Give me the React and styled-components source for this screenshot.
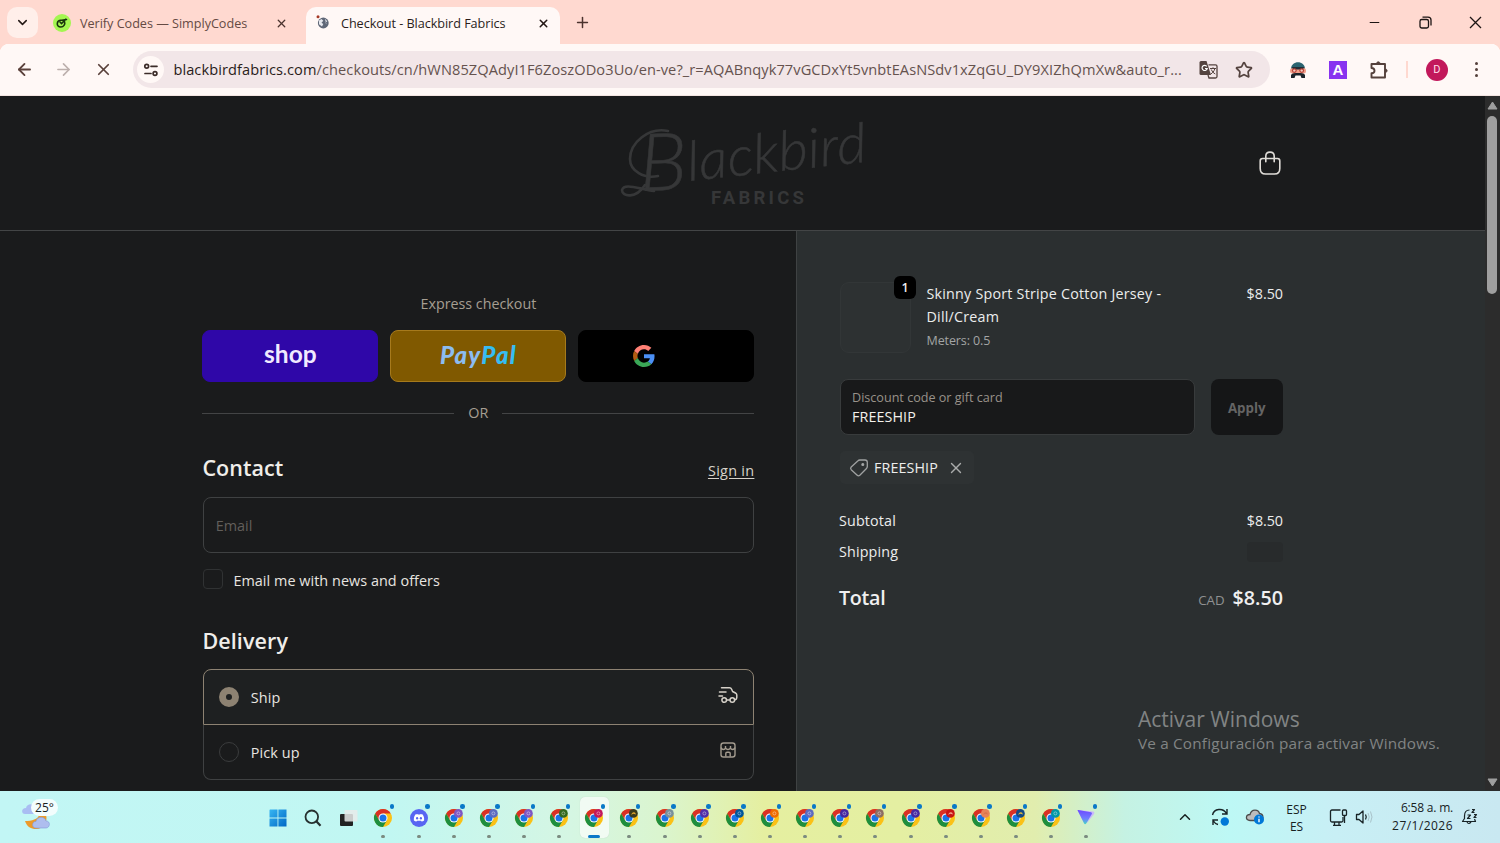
import React from 'react';
import styled, { createGlobalStyle } from 'styled-components';
import { ArrowLeft, ArrowRight, X, Plus, ChevronDown, ChevronUp, Star, Minus } from 'lucide-react';

const GlobalStyle = createGlobalStyle`
    * {
        box-sizing: border-box;
    }
    body {
        margin: 0;
        overflow: hidden;
        font-family: "Open Sans", "Noto Sans", sans-serif;
        background: #1a1b1c;
    }
    svg {
        display: block;
        flex: none;
    }
`;

const taskbarApps = [
    { kind: 'chrome' },
    { kind: 'discord' },
    { kind: 'chrome', profile: '#7e57c2' },
    { kind: 'chrome', profile: '#5c6bc0' },
    { kind: 'chrome', profile: '#7e57c2' },
    { kind: 'chrome', profile: '#33691e' },
    { kind: 'chrome', profile: '#c2185b', active: true },
    { kind: 'chrome', profile: '#3b3a1c', mark: '#e0a52c' },
    { kind: 'chrome', profile: '#78909c' },
    { kind: 'chrome', profile: '#512da8' },
    { kind: 'chrome', profile: '#01579b' },
    { kind: 'chrome', profile: '#ef6c00' },
    { kind: 'chrome', profile: '#5c6bc0' },
    { kind: 'chrome', profile: '#4527a0' },
    { kind: 'chrome', profile: '#8d6e63' },
    { kind: 'chrome', profile: '#4527a0' },
    { kind: 'chrome', profile: '#c81414', mark: '#f3a08c' },
    { kind: 'chrome', profile: '#e8835a', mark: '#d9744c' },
    { kind: 'chrome', profile: '#134a86', mark: '#e2b93c' },
    { kind: 'chrome', profile: '#0097a7' },
    { kind: 'proton' },
];

function ChromeIcon({ profile, mark }) {
    return (
        <svg width="20" height="20" viewBox="0 0 20 20">
            <circle cx="10" cy="10" r="9" fill="#fbc116" />
            <path d="M2.2 5.5A9 9 0 0 1 17.8 5.5L10 5.5L6.1 12.2Z" fill="#d93025" />
            <path d="M2.2 5.5A9 9 0 0 0 10 19L13.9 12.2L6.1 12.2Z" fill="#1e8e3e" />
            <circle cx="10" cy="10" r="4.5" fill="#fff" />
            <circle cx="10" cy="10" r="3.5" fill="#1a73e8" />
            {profile && <circle cx="14.4" cy="5.4" r="4.4" fill={profile} />}
            {profile && !mark && <circle cx="14.4" cy="5.4" r="1.5" fill="none" stroke="#fff" strokeOpacity="0.45" strokeWidth="0.9" />}
            {mark && <path d="M11.8 6.8L14 4.2L16 4.4L17 6.4L14.6 5.8Z" fill={mark} />}
        </svg>
    );
}

function DiscordIcon() {
    return (
        <svg width="20" height="20" viewBox="0 0 20 20">
            <circle cx="10" cy="10" r="9" fill="#5865f2" />
            <path d="M6.3 6.6C7.2 6.1 8 5.9 8.4 5.9L8.8 6.6H11.2L11.6 5.9C12.1 5.9 12.9 6.1 13.7 6.6C14.9 8.5 15.3 10.4 15.1 12.4C14.3 13.1 13.4 13.5 12.6 13.6L12 12.7H8L7.4 13.6C6.6 13.5 5.7 13.1 4.9 12.4C4.7 10.4 5.1 8.5 6.3 6.6Z" fill="#fff" />
            <ellipse cx="8.1" cy="10.2" rx="1.1" ry="1.3" fill="#5865f2" />
            <ellipse cx="11.9" cy="10.2" rx="1.1" ry="1.3" fill="#5865f2" />
        </svg>
    );
}

function ProtonIcon() {
    return (
        <svg width="20" height="20" viewBox="0 0 20 20">
            <defs>
                <linearGradient id="vpn" x1="0" y1="0" x2="0" y2="1">
                    <stop offset="0" stopColor="#6d4aff" />
                    <stop offset="0.6" stopColor="#6f7cff" />
                    <stop offset="1" stopColor="#45d6c8" />
                </linearGradient>
            </defs>
            <path d="M3 2.3L17 3.6Q19 4 18 6L11 15Z" fill="#c9b8fa" />
            <path d="M1.6 2.6Q1 1.8 2.4 2L15 4.2Q16.6 4.8 15.8 6L10.2 15.4Q9 17 8 15.2Z" fill="url(#vpn)" />
        </svg>
    );
}

function BlackbirdLogo() {
    return (
        <svg width="280" height="130" viewBox="-10 -19 280 130">
            <g fill="none" stroke="#363738" strokeWidth="2.6" strokeLinecap="round">
                <path d="M50 14C30 10 12 26 12 42C12 54 26 62 40 59" />
                <path d="M27 68C18 82 4 80 4 73C6 66 18 71 36 74" />
            </g>
            <g fill="#363738" stroke="#363738" strokeWidth="0.5" fontFamily="Lato, sans-serif">
                <text x="22" y="74" fontSize="80" fontStyle="italic" fontWeight="300" textLength="48" lengthAdjust="spacingAndGlyphs" transform="rotate(-2 22 74)">B</text>
                <text x="71" y="64" fontSize="55" fontStyle="italic" fontWeight="300" textLength="180" lengthAdjust="spacingAndGlyphs" transform="rotate(-6.2 71 64)">lackbird</text>
            </g>
            <text x="93" y="87" fill="#363738" fontFamily="Roboto, sans-serif" fontSize="18.5" fontWeight="700" textLength="93">FABRICS</text>
        </svg>
    );
}

function BagIcon() {
    return (
        <svg width="24" height="26" viewBox="0 0 24 26" fill="none" stroke="#e0ddd8" strokeWidth="1.6">
            <path d="M4.5 8.5H19.5Q21.8 8.5 21.8 11V18.5Q21.8 24 16.5 24H7.5Q2.2 24 2.2 18.5V11Q2.2 8.5 4.5 8.5Z" strokeLinejoin="round" />
            <path d="M7.8 11.8V6.2C7.8 0.8 16.2 0.8 16.2 6.2V11.8" strokeLinecap="round" />
        </svg>
    );
}

function GoogleG() {
    return (
        <svg width="22" height="22" viewBox="0 0 48 48">
            <path fill="#ff8075" d="M24 9.5c3.5 0 6.7 1.2 9.2 3.6l6.9-6.9C35.9 2.4 30.5 0 24 0 14.6 0 6.5 5.4 2.6 13.2l8 6.2C12.4 13.7 17.7 9.5 24 9.5z" />
            <path fill="#4b8ff5" d="M47 24.6c0-1.6-.2-3.1-.4-4.6H24v9h12.9c-.6 3-2.2 5.5-4.7 7.2l7.7 6C44.4 38 47 31.8 47 24.6z" />
            <path fill="#b35c12" d="M10.5 28.6c-.5-1.5-.8-3-.8-4.6s.3-3.1.8-4.6l-8-6.2C.9 16.5 0 20.1 0 24s.9 7.5 2.6 10.8z" />
            <path fill="#3aa757" d="M24 48c6.5 0 11.9-2.1 15.9-5.8l-7.7-6c-2.2 1.5-4.9 2.3-8.2 2.3-6.3 0-11.6-4.2-13.5-9.9l-7.9 6.2C6.5 42.6 14.6 48 24 48z" />
        </svg>
    );
}

function App() {
    return (
        <Screen>
            <GlobalStyle />
            <TabStrip>
                <TabSearch><ChevronDown size={15} strokeWidth={2.4} /></TabSearch>
                <Tab $width={268}>
                    <svg width="18" height="18" viewBox="0 0 18 18">
                        <circle cx="9" cy="9" r="9" fill="#a4f651" />
                        <path d="M12.8 5.2L8.5 9.5L7 8M11.5 7.5C12.5 10.5 10.5 13 7.8 13C5.5 13 4 11.4 4.3 9.3C4.6 7.2 6.5 6 8.8 6.3L13.5 5.5" fill="none" stroke="#18340c" strokeWidth="1.6" strokeLinecap="round" />
                    </svg>
                    <TabTitle $color="#654a43" $spacing="-0.03px">Verify Codes — SimplyCodes</TabTitle>
                    <X size={13} color="#4b332e" strokeWidth={2.4} />
                </Tab>
                <Tab $width={254} $active>
                    <svg width="18" height="18" viewBox="0 0 18 18">
                        <circle cx="9.3" cy="9" r="5.4" fill="#5f6777" />
                        <path d="M5 6.5L7.5 5L9.3 6.8L7.5 8.8L9.3 10L8 12.5L5 10.2ZM10.8 4.8L13.3 7.3L11.4 8.8L12.6 10.5" fill="#e6e8ee" />
                        <circle cx="4" cy="2.8" r="1.5" fill="#a63b28" />
                    </svg>
                    <TabTitle $color="#2a1d1a" $spacing="-0.05px">Checkout - Blackbird Fabrics</TabTitle>
                    <X size={13} color="#231815" strokeWidth={2.8} />
                </Tab>
                <NewTab><Plus size={17} strokeWidth={2.1} /></NewTab>
                <WindowControls>
                    <Minus size={15} strokeWidth={1.6} />
                    <svg width="13" height="13" viewBox="0 0 13 13" fill="none" stroke="#1c1413" strokeWidth="1.3">
                        <rect x="1" y="3.5" width="8.5" height="8.5" rx="1.8" />
                        <path d="M3.5 1.1H9Q12 1.1 12 4V9.5" />
                    </svg>
                    <svg width="13" height="13" viewBox="0 0 13 13" stroke="#1c1413" strokeWidth="1.3"><path d="M1 1L12 12M12 1L1 12" /></svg>
                </WindowControls>
            </TabStrip>

            <Toolbar>
                <NavIcon $color="#5a413b"><ArrowLeft size={19} strokeWidth={2.3} /></NavIcon>
                <NavIcon $color="#bdb0ad"><ArrowRight size={19} strokeWidth={2.1} /></NavIcon>
                <NavIcon $color="#5a413b"><X size={19} strokeWidth={2.2} /></NavIcon>
                <AddressBar>
                    <SiteInfo>
                        <svg width="16" height="16" viewBox="0 0 16 16" fill="none" stroke="#3c2c29" strokeWidth="1.7">
                            <circle cx="3.7" cy="4.3" r="1.9" />
                            <path d="M8 4.3H14M2 11.5H8" strokeLinecap="round" />
                            <circle cx="12" cy="11.5" r="1.9" />
                        </svg>
                    </SiteInfo>
                    <Url><b>blackbirdfabrics.com</b>/checkouts/cn/hWN85ZQAdyI1F6ZoszODo3Uo/en-ve?_r=AQABnqyk77vGCDxYt5vnbtEAsNSdv1xZqGU_DY9XIZhQmXw&amp;auto_r...</Url>
                    <svg width="19" height="18" viewBox="0 0 19 18">
                        <path d="M9.5 3.8H16.5Q18 3.8 18 5.3V15.5Q18 17 16.5 17H10L9 14" fill="none" stroke="#54433f" strokeWidth="1.3" />
                        <path d="M2 0H7.5L12 14H2Q0.5 14 0.5 12.5V1.5Q0.5 0 2 0Z" fill="#54433f" />
                        <path d="M7.8 5.4A2.6 2.6 0 1 0 8.2 7.5H6" stroke="#fff" strokeWidth="1.2" fill="none" />
                        <path d="M11 7.5H17M14 6.3V7.5M15.8 7.8C15 10.5 13.5 12 11.8 13M12.3 8.5C13.3 10.8 14.5 12 16.3 13" fill="none" stroke="#54433f" strokeWidth="1" />
                    </svg>
                    <Star size={18} color="#54433f" strokeWidth={2.3} />
                </AddressBar>
                <Extensions>
                    <svg width="18" height="18" viewBox="0 0 18 18">
                        <path d="M2 8C2 -1 16 -1 16 8Z" fill="#2b6470" />
                        <rect x="1" y="7" width="16" height="5.5" rx="2.5" fill="#f2a08b" />
                        <path d="M3 6H15L14 8.5H4Z" fill="#232d35" />
                        <circle cx="5.3" cy="9.6" r="2.4" fill="#b84238" />
                        <circle cx="12.7" cy="9.6" r="2.4" fill="#b84238" />
                        <circle cx="5.3" cy="9.6" r="1.2" fill="#f6c9bd" />
                        <circle cx="12.7" cy="9.6" r="1.2" fill="#f6c9bd" />
                        <path d="M2 17V14C3 12 6 12 9 12C12 12 15 12 16 14V17H12.5L11.5 14.5H6.5L5.5 17Z" fill="#1c242b" />
                    </svg>
                    <ExtensionA>A</ExtensionA>
                    <svg width="20" height="20" viewBox="0 0 20 20" fill="none" stroke="#54403b" strokeWidth="1.9" strokeLinejoin="round">
                        <path d="M2.5 4H16V17.5H2.5V13.3C6.5 13 6.5 8.3 2.5 8Z" />
                        <path d="M7.5 3.5C7.7 1.3 10.9 1.3 11.1 3.5ZM16.5 9C18.7 9.2 18.7 12.2 16.5 12.4Z" fill="#54403b" strokeWidth="0.8" />
                    </svg>
                </Extensions>
                <ToolbarDivider />
                <Avatar>D</Avatar>
                <MenuDots><i /><i /><i /></MenuDots>
            </Toolbar>

            <Viewport>
                <Page>
                    <Header>
                        <BlackbirdLogo />
                        <BagIcon />
                    </Header>
                    <Columns>
                        <Main>
                            <ExpressTitle>Express checkout</ExpressTitle>
                            <ExpressRow>
                                <ExpressButton $bg="#2f07a8"><ShopWord>shop</ShopWord></ExpressButton>
                                <ExpressButton $bg="#805900" $border="#a67a1c"><PayPalWord>Pay<span>Pal</span></PayPalWord></ExpressButton>
                                <ExpressButton $bg="#000" $google><GoogleG /></ExpressButton>
                            </ExpressRow>
                            <OrRow>OR</OrRow>
                            <SectionHead>
                                <SectionTitle $spacing="0.05px">Contact</SectionTitle>
                                <SignIn>Sign in</SignIn>
                            </SectionHead>
                            <EmailField>Email</EmailField>
                            <CheckRow><Checkbox />Email me with news and offers</CheckRow>
                            <SectionTitle $spacing="0.1px">Delivery</SectionTitle>
                            <OptionList>
                                <Option $selected>
                                    <Radio $selected />
                                    <OptionLabel>Ship</OptionLabel>
                                    <svg width="20" height="18" viewBox="0 0 20 18" fill="none" stroke="#d6d1c9" strokeWidth="1.5" strokeLinecap="round" strokeLinejoin="round">
                                        <path d="M3.5 1.8H11.5Q13 1.8 13.6 3.2L14.6 5.5L17.5 7Q18.8 7.7 18.8 9V11.5Q18.8 13.3 17.2 13.8M1.5 6H8M1 10H4.5M8.8 14H11.5" />
                                        <circle cx="6.2" cy="14" r="2.3" />
                                        <circle cx="14.3" cy="14" r="2.3" />
                                    </svg>
                                </Option>
                                <Option>
                                    <Radio />
                                    <OptionLabel>Pick up</OptionLabel>
                                    <svg width="20" height="18" viewBox="0 0 20 18" fill="none" stroke="#a39b8e" strokeWidth="1.4" strokeLinejoin="round">
                                        <rect x="3" y="2" width="14" height="14" rx="2.5" />
                                        <path d="M3 6.5Q3.5 8.5 5.3 8.5Q7 8.5 7.5 7Q8.5 8.5 10 8.5Q11.5 8.5 12.5 7Q13 8.5 14.7 8.5Q16.5 8.5 17 6.5M7.5 5V7M12.5 5V7M7.8 15.5V12.5Q7.8 11.3 9 11.3H11Q12.2 11.3 12.2 12.5V15.5" />
                                    </svg>
                                </Option>
                            </OptionList>
                        </Main>

                        <Summary>
                            <ProductRow>
                                <Thumb><Quantity>1</Quantity></Thumb>
                                <ProductInfo>
                                    <ProductName>Skinny Sport Stripe Cotton Jersey - Dill/Cream</ProductName>
                                    <ProductMeta>Meters: 0.5</ProductMeta>
                                </ProductInfo>
                                <Price>$8.50</Price>
                            </ProductRow>
                            <DiscountRow>
                                <DiscountField>
                                    <small>Discount code or gift card</small>
                                    <span>FREESHIP</span>
                                </DiscountField>
                                <ApplyButton>Apply</ApplyButton>
                            </DiscountRow>
                            <CodeTag>
                                <svg width="20" height="20" viewBox="0 0 20 20" fill="none" stroke="#a0a2a2" strokeWidth="1.3" strokeLinejoin="round">
                                    <path d="M10.8 2H16Q18.3 2 18.3 4.3V8.5Q18.3 9.7 17.5 10.5L10.8 17.3Q9.5 18.5 8.2 17.3L2.2 11.7Q1 10.3 2.2 9L9 2.7Q9.7 2 10.8 2Z" />
                                    <circle cx="13.8" cy="6.5" r="0.9" fill="#d0d0d0" />
                                </svg>
                                <span>FREESHIP</span>
                                <X size={18} color="#a9abab" strokeWidth={1.8} />
                            </CodeTag>
                            <SumRow><span>Subtotal</span><Price>$8.50</Price></SumRow>
                            <SumRow><span>Shipping</span><Skeleton /></SumRow>
                            <TotalRow>
                                <TotalLabel>Total</TotalLabel>
                                <TotalValue><small>CAD</small>$8.50</TotalValue>
                            </TotalRow>
                        </Summary>
                    </Columns>
                </Page>
                <Scrollbar>
                    <svg width="11" height="9" viewBox="0 0 11 9"><path d="M5.5 1L10 8H1Z" fill="#9f9f9f" stroke="#9f9f9f" strokeLinejoin="round" /></svg>
                    <ScrollThumb />
                    <svg width="11" height="9" viewBox="0 0 11 9"><path d="M5.5 8L10 1H1Z" fill="#9f9f9f" stroke="#9f9f9f" strokeLinejoin="round" /></svg>
                </Scrollbar>
                <ActivationNotice>
                    <h4>Activar Windows</h4>
                    <p>Ve a Configuración para activar Windows.</p>
                </ActivationNotice>
            </Viewport>

            <Taskbar>
                <Weather>
                    <svg width="32" height="30" viewBox="0 0 32 30">
                        <path d="M3 20C10 20 16 18 17 14H24C26 20 22 28 14 28C9 28 5 26 3 20Z" fill="#ec9a2b" />
                        <path d="M3 13C-1 13 -1 7 4 7C5 2 12 2 13 7V13Z" fill="#a9bdf2" />
                        <path d="M14 27C9 27 10 20 14 20.5C15 15 23 15 24 20C29 20 28 27 24 27Z" fill="#aebdee" stroke="#8098d8" strokeWidth="0.6" />
                    </svg>
                    <Temperature>25°</Temperature>
                </Weather>
                <Apps>
                    <AppCell>
                        <svg width="18" height="18" viewBox="0 0 18 18">
                            <defs>
                                <linearGradient id="win" x1="0" y1="0" x2="1" y2="1">
                                    <stop offset="0" stopColor="#38b6f2" />
                                    <stop offset="1" stopColor="#0067c5" />
                                </linearGradient>
                            </defs>
                            <path d="M1 .5H8.5V8.5H.5V1ZM9.4 .5H17.5V8.5H9.4ZM.5 9.4H8.5V17.5H.5ZM9.4 9.4H17.5V17.5H9.4Z" fill="url(#win)" />
                        </svg>
                    </AppCell>
                    <AppCell>
                        <svg width="18" height="18" viewBox="0 0 18 18" fill="none" stroke="#26302f" strokeWidth="1.8">
                            <circle cx="7.8" cy="7.8" r="6.3" />
                            <path d="M12.3 12.3L16.5 16.8" strokeWidth="2.2" />
                        </svg>
                    </AppCell>
                    <AppCell>
                        <svg width="20" height="18" viewBox="0 0 20 18">
                            <rect x="2" y="5" width="13" height="12" rx="1" fill="#222" />
                            <rect x="6.5" y="1" width="13" height="11.5" rx="1" fill="#e7ebea" fillOpacity="0.85" />
                        </svg>
                    </AppCell>
                    {taskbarApps.map((app, index) => (
                        <AppCell key={index} $active={app.active}>
                            {app.kind === 'chrome' && <ChromeIcon profile={app.profile} mark={app.mark} />}
                            {app.kind === 'discord' && <DiscordIcon />}
                            {app.kind === 'proton' && <ProtonIcon />}
                            <Notification />
                            <Running $active={app.active} />
                        </AppCell>
                    ))}
                </Apps>
                <Tray>
                    <TraySlot $width={35}><ChevronUp size={18} strokeWidth={2} /></TraySlot>
                    <TraySlot $width={35}>
                        <svg width="20" height="20" viewBox="0 0 20 20" fill="none" stroke="#182326" strokeWidth="1.4">
                            <path d="M2.5 8C4 1.5 13 .5 16.5 6.5M17 2V7H12M3 18V13H8M3 13.5C4.5 16 6 17 8 17.5" />
                            <circle cx="14.8" cy="14.5" r="4.2" fill="#0078d7" stroke="none" />
                        </svg>
                    </TraySlot>
                    <TraySlot $width={35}>
                        <svg width="20" height="18" viewBox="0 0 20 18">
                            <path d="M5 12.5C0 12.5 .5 6.5 5 6.5C6.5 .5 13.5 1 14.5 5.5C19 6 19 12.5 15 12.5Z" fill="#bdbdbd" stroke="#4c4c4c" strokeWidth="1.3" />
                            <circle cx="14" cy="11.5" r="5" fill="#0078d7" />
                            <path d="M14 8.5V9.5M14 10.8V14.3" stroke="#fff" strokeWidth="1.4" />
                        </svg>
                    </TraySlot>
                    <Language><span>ESP</span><span>ES</span></Language>
                    <TraySlot $width={25}>
                        <svg width="19" height="19" viewBox="0 0 19 19" fill="none" stroke="#182326" strokeWidth="1.3">
                            <path d="M11.5 2H3Q1.5 2 1.5 3.5V12.5Q1.5 14 3 14H12.5Q14 14 14 12.5V9M5.5 14V17M10 14V17M4 17.3H12" />
                            <rect x="13.5" y="2" width="4" height="5.5" rx="1" />
                            <path d="M15.5 7.5V15" />
                        </svg>
                    </TraySlot>
                    <TraySlot $width={25}>
                        <svg width="18" height="16" viewBox="0 0 18 16" fill="none" stroke="#182326" strokeWidth="1.3" strokeLinejoin="round">
                            <path d="M1.5 5.5H4L8 2V14L4 10.5H1.5Z" />
                            <path d="M10.5 5.5Q12 8 10.5 10.5" />
                            <path d="M13 4Q15.5 8 13 12M15.5 2.5Q18.5 8 15.5 13.5" stroke="#a9c2c9" strokeWidth="1" />
                        </svg>
                    </TraySlot>
                    <Clock><Time>6:58 a. m.</Time><span>27/1/2026</span></Clock>
                    <svg width="18" height="18" viewBox="0 0 18 18" fill="none" stroke="#182326" strokeWidth="1.2" strokeLinejoin="round">
                        <path d="M8.5 2C5 2 3.5 5 3.5 8V10.5L1.5 13.5H14.5L13.5 11M6 14Q7.5 17 10 14M6.5 7H9.5L6.5 10.5H9.5M11 1.5H13.5L11 4.5H13.5M13 6.5H15.5L13 9.5H15.5" />
                    </svg>
                </Tray>
            </Taskbar>
        </Screen>
    );
}

const Screen = styled.div`
    width: 1500px;
    height: 843px;
    display: flex;
    flex-direction: column;
    overflow: hidden;
`;

const TabStrip = styled.div`
    height: 44px;
    flex: none;
    display: flex;
    align-items: flex-start;
    padding: 7px 18px 0 7px;
    background: #ffd9d0;
    color: #4b332e;
`;

const TabSearch = styled.div`
    width: 31px;
    height: 31px;
    display: flex;
    align-items: center;
    justify-content: center;
    border-radius: 10px;
    background: #ffefea;
    color: #231815;
`;

const Tab = styled.div`
    width: ${(props) => props.$width}px;
    height: 37px;
    display: flex;
    align-items: center;
    gap: 9px;
    padding: 0 ${(props) => (props.$active ? '10px 5px 8px' : '18px 5px 15px')};
    border-radius: 10px 10px 0 0;
    background: ${(props) => (props.$active ? '#fff8f6' : 'transparent')};
`;

const TabTitle = styled.div`
    flex: 1;
    font-size: 12.65px;
    line-height: 32px;
    white-space: nowrap;
    color: ${(props) => props.$color};
    letter-spacing: ${(props) => props.$spacing};
`;

const NewTab = styled.div`
    padding: 7px 14px;
`;

const WindowControls = styled.div`
    margin-left: auto;
    display: flex;
    align-items: center;
    gap: 37px;
    height: 31px;
    color: #1c1413;
`;

const Toolbar = styled.div`
    height: 52px;
    flex: none;
    display: flex;
    align-items: center;
    padding-left: 5px;
    background: radial-gradient(circle at 9px 9px, #fff8f6 9px, #ffd9d0 9.5px) 0 0 / 9px 9px no-repeat,
        radial-gradient(circle at 0 9px, #fff8f6 9px, #ffd9d0 9.5px) 100% 0 / 9px 9px no-repeat,
        #fff8f6;
    border-bottom: 1px solid #f3e4e1;
`;

const NavIcon = styled.div`
    width: 39.3px;
    display: flex;
    justify-content: center;
    color: ${(props) => props.$color};
`;

const AddressBar = styled.div`
    width: 1137px;
    height: 37px;
    margin-left: 10px;
    padding: 0 17px 0 4.5px;
    display: flex;
    align-items: center;
    gap: 17px;
    border-radius: 19px;
    background: #f2e6e8;
`;

const SiteInfo = styled.div`
    width: 27px;
    height: 27px;
    margin-right: -8px;
    display: flex;
    align-items: center;
    justify-content: center;
    border-radius: 50%;
    background: #fff8f6;
`;

const Url = styled.div`
    flex: 1;
    white-space: nowrap;
    font-size: 14.6px;
    line-height: 22px;
    padding-bottom: 1px;
    letter-spacing: 0.08px;
    color: #65524e;

    b {
        font-weight: 400;
        color: #2a1d1a;
    }
`;

const Extensions = styled.div`
    display: flex;
    align-items: center;
    gap: 22px;
    margin-left: 19px;
`;

const ExtensionA = styled.div`
    width: 18px;
    height: 18px;
    background: #8833f0;
    color: #fff;
    font: 600 15px/18px "Liberation Sans", sans-serif;
    text-align: center;
`;

const ToolbarDivider = styled.div`
    width: 2px;
    height: 17px;
    margin: 0 18px 0 17px;
    background: #ffd9d0;
`;

const Avatar = styled.div`
    width: 22px;
    height: 22px;
    border-radius: 50%;
    background: #c2185b;
    color: #ffdfe8;
    font: 11px/22px Roboto, sans-serif;
    text-align: center;
`;

const MenuDots = styled.div`
    display: flex;
    flex-direction: column;
    gap: 3px;
    margin-left: 27px;

    i {
        width: 3px;
        height: 3px;
        border-radius: 50%;
        background: #54403b;
    }
`;

const Viewport = styled.div`
    position: relative;
    flex: 1;
    min-height: 0;
    display: flex;
`;

const Page = styled.div`
    width: 1485px;
    display: flex;
    flex-direction: column;
    background: #1a1b1c;
`;

const Header = styled.div`
    height: 135px;
    flex: none;
    display: flex;
    align-items: center;
    justify-content: space-between;
    padding: 0 203px 0 608px;
    border-bottom: 1px solid #434546;
`;

const Columns = styled.div`
    flex: 1;
    display: flex;
`;

const Main = styled.div`
    width: 797px;
    padding: 61px 41.6px 0 202.4px;
    border-right: 1px solid #3f4243;
    color: #e8e5e0;
    font-size: 14.4px;
`;

const ExpressTitle = styled.div`
    text-align: center;
    line-height: 24px;
    font-size: 14.3px;
    color: #a69e92;
`;

const ExpressRow = styled.div`
    display: grid;
    grid-template-columns: repeat(3, 1fr);
    gap: 12px;
    margin-top: 14px;
`;

const ExpressButton = styled.div`
    height: 52px;
    display: flex;
    align-items: center;
    justify-content: center;
    padding-right: ${(props) => (props.$google ? '44px' : '0')};
    border-radius: 8px;
    border: 1px solid ${(props) => props.$border || props.$bg};
    background: ${(props) => props.$bg};
`;

const ShopWord = styled.div`
    font: 700 24.5px/26px Lato, sans-serif;
    color: #f0eaff;
    padding-bottom: 4px;
`;

const PayPalWord = styled.div`
    font: italic 900 24px/26px Lato, sans-serif;
    letter-spacing: 1.2px;
    color: #8cbcf0;
    padding-bottom: 3px;

    span {
        color: #36bdf2;
    }
`;

const OrRow = styled.div`
    display: flex;
    align-items: center;
    gap: 14px;
    margin-top: 19px;
    line-height: 24px;
    color: #a69e92;

    &::before,
    &::after {
        content: '';
        flex: 1;
        height: 1px;
        background: #434445;
    }
`;

const SectionHead = styled.div`
    display: flex;
    justify-content: space-between;
    align-items: center;
    margin-top: 28px;
`;

const SectionTitle = styled.div`
    font-size: 21.5px;
    font-weight: 600;
    line-height: 30px;
    letter-spacing: ${(props) => props.$spacing};
    color: #f0eeea;
`;

const SignIn = styled.div`
    padding-top: 4px;
    letter-spacing: 0.3px;
    text-decoration: underline;
    text-underline-offset: 2px;
    color: #d6d1c9;
`;

const Field = styled.div`
    height: 56px;
    border: 1px solid #3f4142;
    border-radius: 8px;
`;

const EmailField = styled(Field)`
    margin: 14px 0 0 0.4px;
    padding-left: 12px;
    line-height: 55px;
    color: #625f5b;
`;

const CheckRow = styled.div`
    display: flex;
    align-items: center;
    gap: 10px;
    height: 24px;
    margin: 15px 0 34px 1px;
    letter-spacing: 0.05px;
`;

const Checkbox = styled.div`
    width: 20px;
    height: 20px;
    margin-top: -2px;
    border: 1px solid #303233;
    border-radius: 4px;
`;

const OptionList = styled.div`
    margin: 13px 0 0 0.4px;
`;

const Option = styled.div`
    height: ${(props) => (props.$selected ? '56px' : '55px')};
    display: flex;
    align-items: center;
    padding: 0 15px;
    border: 1px solid ${(props) => (props.$selected ? '#8d8272' : '#3f4142')};
    border-top-width: ${(props) => (props.$selected ? '1px' : '0')};
    border-radius: ${(props) => (props.$selected ? '8px 8px 0 0' : '0 0 8px 8px')};
    background: ${(props) => (props.$selected ? '#1e2021' : 'transparent')};

    svg {
        margin-bottom: 4px;
    }
`;

const Radio = styled.div`
    width: 20px;
    height: 20px;
    border-radius: 50%;
    border: ${(props) => (props.$selected ? '7px solid #8d8272' : '1px solid #3a3c3d')};
`;

const OptionLabel = styled.div`
    flex: 1;
    margin-left: 12px;
    letter-spacing: 0.1px;
`;

const Summary = styled.div`
    flex: 1;
    padding: 51px 202px 0 43px;
    background: #2b2f30;
    color: #eceded;
    font-size: 14.3px;
    font-weight: 500;
`;

const ProductRow = styled.div`
    display: flex;
    height: 72px;
`;

const Thumb = styled.div`
    position: relative;
    width: 71px;
    height: 71px;
    border: 1px solid #323637;
    border-radius: 9px;
    background: #2d3132;
`;

const Quantity = styled.div`
    position: absolute;
    top: -7px;
    right: -6px;
    width: 22px;
    height: 23px;
    border-radius: 6px;
    background: #000;
    color: #eee;
    font-size: 12.5px;
    font-weight: 600;
    line-height: 23px;
    text-align: center;
`;

const ProductInfo = styled.div`
    width: 260px;
    margin-left: 15.5px;
`;

const ProductName = styled.div`
    line-height: 23px;
    letter-spacing: 0.22px;
`;

const ProductMeta = styled.div`
    font-size: 12.5px;
    line-height: 25px;
    letter-spacing: -0.1px;
    color: #a3a5a5;
`;

const Price = styled.div`
    margin-left: auto;
    line-height: 23px;
`;

const DiscountRow = styled.div`
    display: flex;
    gap: 16px;
    height: 56px;
    margin-top: 25px;
`;

const DiscountField = styled(Field)`
    width: 355px;
    padding: 8px 11px;
    display: flex;
    flex-direction: column;
    border-color: #383b3c;
    background: #18191a;
    color: #f3f1ed;
    font-weight: 400;

    small {
        font-size: 12.6px;
        line-height: 19px;
        color: #98928a;
    }
    span {
        line-height: 19px;
        letter-spacing: 0.1px;
    }
`;

const ApplyButton = styled.div`
    flex: 1;
    display: flex;
    align-items: center;
    justify-content: center;
    margin-left: -0.5px;
    padding-top: 1px;
    border-radius: 8px;
    background: #151617;
    color: #646464;
    font-size: 13.3px;
    font-weight: 700;
`;

const CodeTag = styled.div`
    width: 134px;
    height: 33px;
    margin: 16px 0 25px;
    padding: 0 9px;
    display: flex;
    align-items: center;
    border-radius: 5px;
    background: #2e3233;
    font-weight: 400;

    span {
        flex: 1;
        margin-left: 5px;
        letter-spacing: 0.1px;
    }
`;

const SumRow = styled.div`
    display: flex;
    align-items: center;
    height: 23px;
    margin: 0 0 8px -1px;
    letter-spacing: 0.15px;

    ${Price} {
        letter-spacing: -0.05px;
    }
`;

const Skeleton = styled.div`
    width: 36px;
    height: 20px;
    margin-left: auto;
    border-radius: 4px;
    background: #282b2c;
`;

const TotalRow = styled.div`
    display: flex;
    align-items: baseline;
    justify-content: space-between;
    margin: 20px 0 0 -1px;
    font-size: 19.7px;
    font-weight: 600;
    line-height: 30px;
    color: #f0f0f0;
`;

const TotalLabel = styled.div`
    letter-spacing: -0.3px;
`;

const TotalValue = styled.div`
    small {
        margin-right: 8px;
        font-size: 13.3px;
        font-weight: 400;
        line-height: 1;
        color: #8f9192;
    }
`;

const Scrollbar = styled.div`
    width: 15px;
    padding: 5px 1px 4px 0;
    display: flex;
    flex-direction: column;
    align-items: center;
    background: #2c2c2c;

    svg:last-child {
        margin-top: auto;
    }
`;

const ScrollThumb = styled.div`
    width: 10px;
    height: 178px;
    margin-top: 6px;
    border-radius: 5px;
    background: #9f9f9f;
`;

const ActivationNotice = styled.div`
    position: absolute;
    left: 1138px;
    top: 609px;
    color: #818484;

    h4 {
        margin: 0;
        font-size: 21px;
        font-weight: 400;
        line-height: 29px;
    }
    p {
        margin: -2px 0 0;
        font-size: 15.3px;
        line-height: 22px;
        letter-spacing: 0.18px;
        white-space: nowrap;
    }
`;

const Taskbar = styled.div`
    height: 52px;
    flex: none;
    display: flex;
    background: linear-gradient(90deg, #c2f6f5 0%, #c1f7f2 26%, #d5f6e3 38%, #daf5cf 44%, #e5efa0 51%, #e4efa2 60%, #e1edae 69%, #c5f2e3 75%, #bdf8f5 82%, #c8eff5 89%, #c9e8f1 100%);
    color: #17211f;
`;

const Weather = styled.div`
    position: relative;
    width: 260px;
    padding: 10px 0 0 22px;
`;

const Temperature = styled.div`
    position: absolute;
    left: 31px;
    top: 8px;
    width: 27px;
    height: 17px;
    border-radius: 9px;
    background: #f3fdfd;
    font-size: 12px;
    line-height: 17px;
    text-align: center;
`;

const Apps = styled.div`
    display: flex;
    align-items: center;
    width: 845px;
    padding: 1px 0 0 0.5px;
`;

const AppCell = styled.div`
    position: relative;
    width: 35.15px;
    flex: none;
    height: 51px;
    display: flex;
    align-items: center;
    justify-content: center;
    ${(props) => props.$active && `
        width: 29.15px;
        height: 41px;
        margin: 0 3px;
        border-radius: 5px;
        background: #f1fbf3;
        box-shadow: 0 0 1px #b9cfc0;
    `}
`;

const Notification = styled.i`
    position: absolute;
    top: calc(50% - 13.5px);
    left: calc(50% + 6.5px);
    width: 4.5px;
    height: 4.5px;
    border-radius: 50%;
    background: #0a78c8;
`;

const Running = styled.i`
    position: absolute;
    top: calc(50% + 17.5px);
    left: calc(50% - ${(props) => (props.$active ? '6px' : '2px')});
    width: ${(props) => (props.$active ? '12px' : '4px')};
    height: 3px;
    border-radius: 2px;
    background: ${(props) => (props.$active ? '#0a78c8' : '#7b8b80')};
`;

const Tray = styled.div`
    margin-left: auto;
    display: flex;
    align-items: center;
    padding-right: 21px;
`;

const TraySlot = styled.div`
    width: ${(props) => props.$width}px;
    display: flex;
    justify-content: center;
`;

const Language = styled.div`
    width: 49px;
    margin-right: 5px;
    display: flex;
    flex-direction: column;
    align-items: center;
    font-size: 12px;
    line-height: 17px;
    padding-top: 1px;
`;

const Clock = styled.div`
    width: 77px;
    margin-right: 8px;
    display: flex;
    flex-direction: column;
    align-items: flex-end;
    font-size: 12px;
    line-height: 18px;
    letter-spacing: 0.45px;
    white-space: nowrap;
`;

const Time = styled.span`
    letter-spacing: -0.2px;
`;

export default App;
